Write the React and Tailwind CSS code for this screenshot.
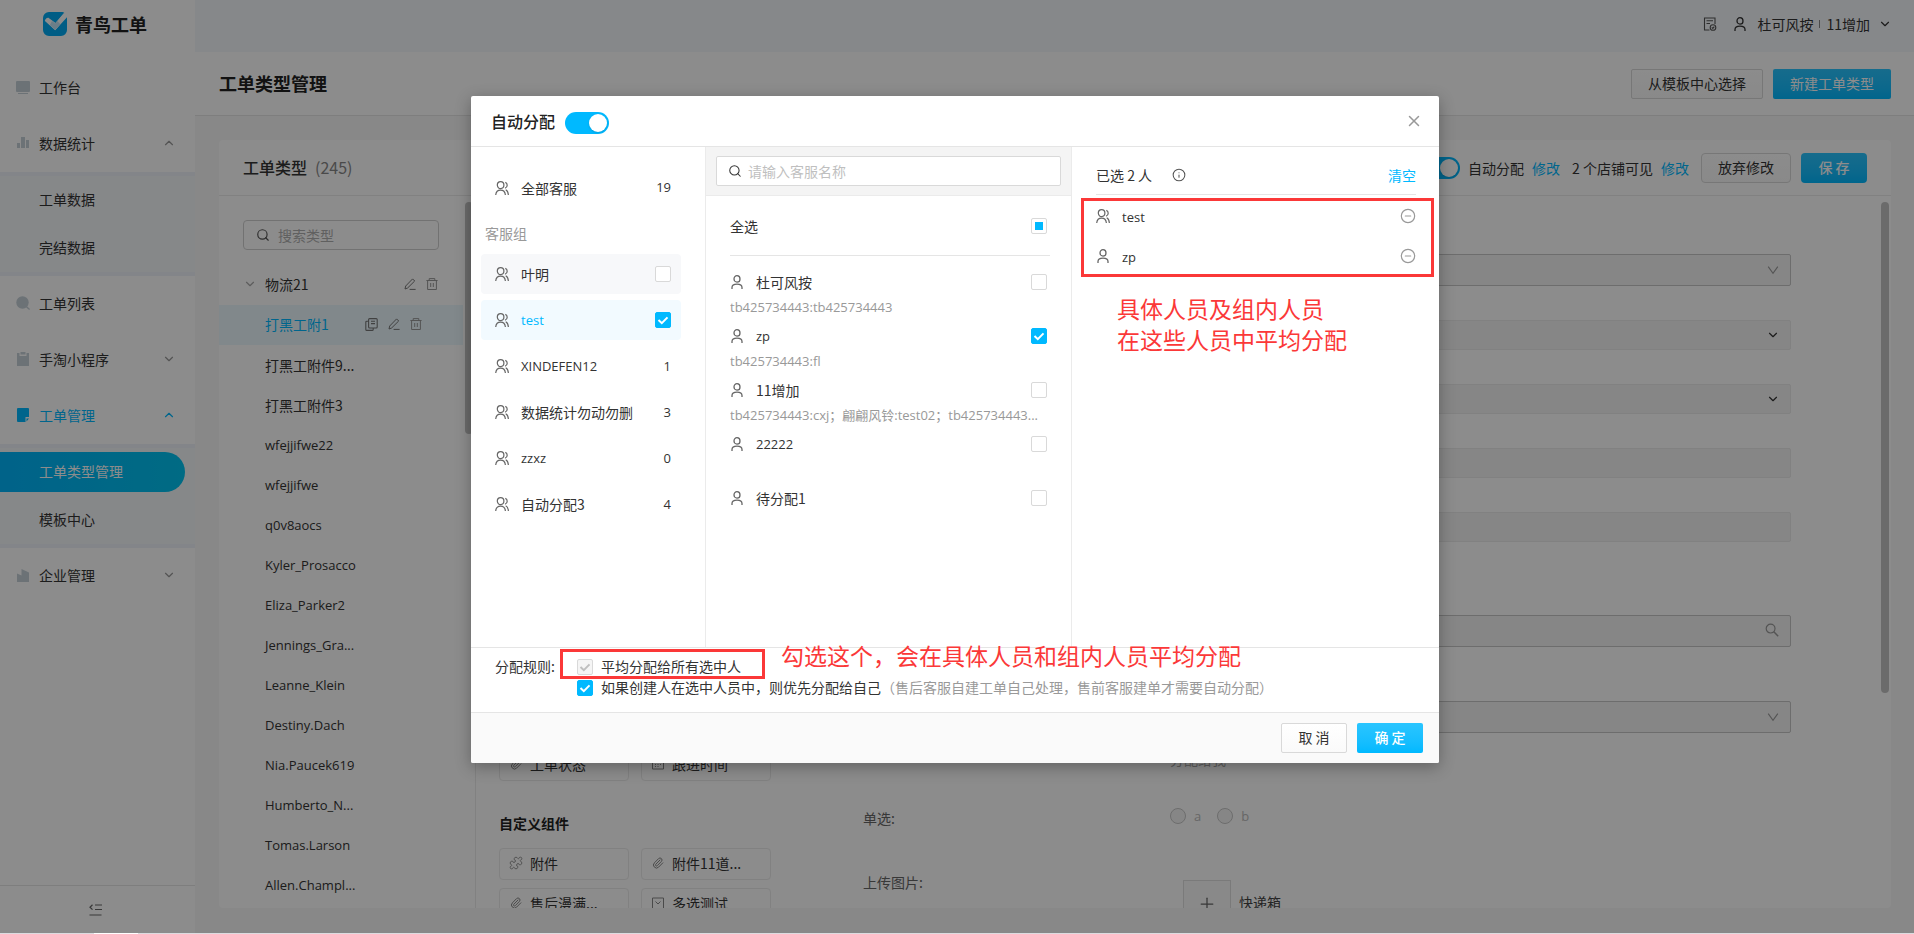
import React from 'react';
import { ChevronDown, ChevronUp, Search, X, Plus, Info, CircleMinus, Paperclip, Puzzle } from 'lucide-react';
import clsx from 'clsx';

const FONT = "font-['Noto_Sans_CJK_SC',sans-serif]";
const LATIN = "font-['Open_Sans','Noto_Sans_CJK_SC',sans-serif] text-[13px]";

// names without any CJK glyphs are set in the latin face
function Name({ children, className }) {
  const latin = /^[\x20-\x7e]+$/.test(children);
  return <span className={clsx('whitespace-nowrap', latin && LATIN, className)}>{children}</span>;
}

/* ---------- icons ---------- */

const PersonIcon = ({ className = 'h-3.5 w-3.5 text-[#666]' }) => (
  <svg viewBox="0 0 14 14" fill="none" stroke="currentColor" strokeWidth="1.3" className={clsx('shrink-0', className)}>
    <ellipse cx="7" cy="3.9" rx="3" ry="3.2" />
    <path d="M2 14v-1.6C2 10.3 3.6 9.2 7 9.2s5 1.1 5 3.2V14" />
  </svg>
);

const GroupIcon = ({ className = 'h-3.5 w-3.5 text-[#666]' }) => (
  <svg viewBox="0 0 14 14" fill="none" stroke="currentColor" strokeWidth="1.2" className={clsx('shrink-0', className)}>
    <ellipse cx="5.6" cy="4.1" rx="3.3" ry="3.5" />
    <path d="M.7 14c.3-3.2 2.1-4.9 4.9-4.9s4.5 1.7 4.8 4.9" />
    <path d="M10.3 1.4c1.3.5 1.9 1.5 1.9 2.8s-.8 2.5-2.2 3.1" />
    <path d="M10.7 8.8c1.7.8 2.5 2.5 2.7 5.2" />
  </svg>
);

const ThinChevron = ({ className }) => (
  <svg viewBox="0 0 12 12" fill="none" stroke="currentColor" strokeWidth="1.1" className={clsx('h-3 w-3', className)}>
    <path d="M1.2 2.6L6 9.2l4.8-6.6" />
  </svg>
);

const PencilIcon = () => (
  <svg viewBox="0 0 12 12" fill="none" stroke="currentColor" strokeWidth="1" className="h-3 w-3">
    <path d="M8.6.9l2.1 2.1L3.6 10 1 11l.7-3z M5.6 11.4h6" />
  </svg>
);

const TrashIcon = () => (
  <svg viewBox="0 0 12 12" fill="none" stroke="currentColor" strokeWidth="1" className="h-3 w-3 text-[#999]">
    <path d="M.4 2.5h11.2M3.2 2.5V.6h5.6v1.9M1.6 2.5v9h8.8v-9M4.7 5v4M7.3 5v4" />
  </svg>
);

const CopyIcon = () => (
  <svg viewBox="0 0 13 13" fill="none" stroke="currentColor" strokeWidth="1.1" className="h-[13px] w-[13px]">
    <rect x="3.6" y=".6" width="8.6" height="9.4" rx="1" />
    <path d="M3.6 3.2H1.8a1 1 0 0 0-1 1v7.2a1 1 0 0 0 1 1h5.4a1 1 0 0 0 1-1V10M6 3.3h4M6 5.6h4" />
  </svg>
);

const CheckMark = ({ className }) => (
  <svg viewBox="0 0 16 16" fill="none" stroke="currentColor" strokeWidth="2" className={className}>
    <path d="M3.5 8l3.3 3.2L12.5 5.4" />
  </svg>
);

const Logo = () => (
  <svg viewBox="0 0 24 24" className="h-6 w-6">
    <path d="M6 0h12.5c1.4 0 2.2.3 2.8.9L12.6 11 5 5.6 1.7 8.7l10.5 9.5L24 5.2V18a6 6 0 0 1-6 6H6a6 6 0 0 1-6-6V6a6 6 0 0 1 6-6z" fill="#00aaf2" />
    <path d="M2.6 7.2c.8-1.2 2-1.5 3-.7l6.5 5 8.6-10.3c1.2.6 2 1.5 2.4 2.8L13.4 16.7c-.8.9-1.8.9-2.6.1L2.7 9.3c-.7-.6-.6-1.5-.1-2.1z" fill="#fff" />
    <path d="M9 9.1l3.1 2.4 2.2-2.4 3.1 3.1-4 4.5c-.8.9-1.8.9-2.6.1L6.9 13z" fill="#a9dcf5" opacity=".7" />
  </svg>
);

const menuIcons = {
  desk: (
    <>
      <rect x="0" y="1" width="14" height="11" rx="1" />
      <rect x="2" y="13" width="10" height="1" />
    </>
  ),
  stats: (
    <>
      <rect x="1" y="7" width="3" height="5" />
      <rect x="5" y="1" width="4" height="11" />
      <rect x="10" y="4" width="3" height="8" />
    </>
  ),
  list: (
    <>
      <circle cx="6.5" cy="6.5" r="6.2" />
      <path d="M10 11.2l1-1 3 2.8-.8.9z" />
    </>
  ),
  clip: <path d="M1 1h2.5v3h7V1H13v13H1zM4.5 0h5v2.6h-5z" />,
  note: <path d="M2 0h10a1 1 0 0 1 1 1v8H9.5v5H2a1 1 0 0 1-1-1V1a1 1 0 0 1 1-1zM10.5 10.5H13L10.5 13.5z" />,
  corp: <path d="M1 5.5l4.5 2V1L13 4.5V14H1z" />,
};

/* ---------- form controls ---------- */

function Checkbox({ label, checked, disabled, partial }) {
  return (
    <span className="relative inline-flex h-4 w-4 shrink-0">
      <input
        type="checkbox"
        aria-label={label}
        defaultChecked={checked}
        disabled={disabled}
        className="peer h-4 w-4 appearance-none rounded-xs border border-[#d9d9d9] bg-white enabled:checked:border-[#00b9ff] enabled:checked:bg-[#00b9ff] disabled:bg-[#f5f5f5]"
      />
      <CheckMark
        className={clsx('pointer-events-none absolute inset-0 hidden h-4 w-4 peer-checked:block', disabled ? 'text-[#bfbfbf]' : 'text-white')}
      />
      {partial && <span className="pointer-events-none absolute inset-1 bg-[#00b9ff]" />}
    </span>
  );
}

function Toggle({ label, className }) {
  return (
    <button
      type="button"
      role="switch"
      aria-checked="true"
      aria-label={label}
      className={clsx('flex h-[22px] w-11 shrink-0 items-center justify-end rounded-full bg-[#00b9ff] p-0.5', className)}
    >
      <span className="h-[18px] w-[18px] rounded-full bg-white shadow-sm" />
    </button>
  );
}

function Button({ primary, className, children }) {
  return (
    <button
      type="button"
      className={clsx(
        'flex h-[30px] items-center justify-center whitespace-nowrap border pb-0.5 text-sm',
        primary
          ? 'border-transparent bg-linear-to-b from-[#29c5ff] to-[#00b9ff] bg-origin-border text-white'
          : 'border-[#d9d9d9] bg-linear-to-b from-white to-[#fafafa] text-[#333]',
        className,
      )}
    >
      {children}
    </button>
  );
}

/* ---------- sidebar ---------- */

const MENU = [
  { icon: 'desk', label: '工作台' },
  { icon: 'stats', label: '数据统计', open: true, children: ['工单数据', '完结数据'] },
  { icon: 'list', label: '工单列表' },
  { icon: 'clip', label: '手淘小程序', folded: true },
  { icon: 'note', label: '工单管理', open: true, active: true, children: ['工单类型管理', '模板中心'] },
  { icon: 'corp', label: '企业管理', folded: true },
];

function Sidebar() {
  return (
    <aside className="flex w-[195px] shrink-0 flex-col bg-white">
      <div className="flex h-12 items-center gap-2 pl-[43px] text-lg font-bold text-[#222]">
        <Logo />
        青鸟工单
      </div>
      <nav className="mt-3 flex-1">
        {MENU.map((item) => (
          <div key={item.label}>
            <a
              href="#"
              className={clsx('flex h-14 items-center pb-0.5 pl-4 pr-[19px]', item.active ? 'text-[#00b9ff]' : 'text-[#333]')}
            >
              <svg viewBox="0 0 14 14" className={clsx('h-3.5 w-3.5', item.active ? 'fill-[#00b9ff]' : 'fill-[#c5d0d8]')}>
                {menuIcons[item.icon]}
              </svg>
              <span className="ml-[9px] flex-1">{item.label}</span>
              {item.open && <ChevronUp className={clsx('h-3.5 w-3.5', !item.active && 'text-[#999]')} />}
              {item.folded && <ChevronDown className="h-3.5 w-3.5 text-[#999]" />}
            </a>
            {item.children && (
              <div className="flex flex-col gap-2 border-y-4 border-[#eef3f9] bg-[#f5f7fa] py-1">
                {item.children.map((child) => (
                  <a
                    key={child}
                    href="#"
                    className={clsx(
                      'mr-2.5 flex h-10 items-center rounded-r-full pb-0.5 pl-[39px]',
                      child === '工单类型管理' ? 'bg-linear-to-r from-[#00b4fa] to-[#00c3f0] text-white' : 'text-[#333]',
                    )}
                  >
                    {child}
                  </a>
                ))}
              </div>
            )}
          </div>
        ))}
      </nav>
      <button type="button" aria-label="收起菜单" className="flex h-12 items-center justify-center border-t border-[#e5e5e5] pr-1">
        <svg viewBox="0 0 13 12" fill="none" stroke="#666" strokeWidth="1.2" className="h-3 w-[13px]">
          <path d="M6 1h7M6 5.5h7M.5 11h12M3.5.8L1 3.2l2.5 2.4" />
        </svg>
      </button>
    </aside>
  );
}

/* ---------- page ---------- */

function TopBar() {
  return (
    <header className="flex h-[52px] shrink-0 items-center justify-end bg-[#f5f8fc] pb-1 pr-[22px] text-[#333]">
      <svg viewBox="0 0 14 14" fill="none" stroke="#555" strokeWidth="1.1" className="mr-4 h-3.5 w-3.5">
        <path d="M6.5 13H1.5V1h10.5v6M3.5 3.8h6.5M3.5 6.5h3.5" />
        <circle cx="10" cy="10.5" r="2.8" />
        <path d="M8.8 10.4l1 1 1.5-1.8" />
      </svg>
      <PersonIcon className="mr-2.5 h-3.5 w-3.5 text-[#333]" />
      <span>杜可风按</span>
      <span className="mx-1.5 h-2 w-px bg-[#888]" />
      <span>11增加</span>
      <ChevronDown className="ml-2 h-3.5 w-3.5" />
    </header>
  );
}

const TYPES = [
  '打黑工附件9...',
  '打黑工附件3',
  'wfejjifwe22',
  'wfejjifwe',
  'q0v8aocs',
  'Kyler_Prosacco',
  'Eliza_Parker2',
  'Jennings_Gra...',
  'Leanne_Klein',
  'Destiny.Dach',
  'Nia.Paucek619',
  'Humberto_N...',
  'Tomas.Larson',
  'Allen.Champl...',
];

function TypeList() {
  return (
    <section className="flex w-[257px] shrink-0 flex-col border-r border-[#ebebeb]">
      <h2 className="flex h-14 shrink-0 items-center gap-2 border-b border-[#ebebeb] pb-0.5 pl-6 text-base font-medium text-[#333]">
        工单类型 <span className="font-normal text-[#888]">(245)</span>
      </h2>
      <div className="flex min-h-0 flex-1">
        <div className="min-w-0 flex-1">
          <label className="ml-6 mt-6 flex h-[30px] w-[196px] items-center gap-2 rounded-sm border border-[#d0d0d0] px-3">
            <Search className="h-3.5 w-3.5 shrink-0 text-[#555]" />
            <input placeholder="搜索类型" aria-label="搜索类型" className="w-full outline-none placeholder:text-[#b0b0b0]" />
          </label>
          <div className="mt-[15px] flex h-10 items-center pb-0.5 pl-6 pr-[25px] text-[#333]">
            <ChevronDown className="mr-2 h-3.5 w-3.5 text-[#aaa]" />
            <span className="flex-1">物流21</span>
            <span className="flex gap-2.5 text-[#777]">
              <PencilIcon />
              <TrashIcon />
            </span>
          </div>
          <div className="flex h-10 items-center bg-[#ebf8fe] pb-0.5 pl-[46px] pr-[41px] text-[#00b9ff]">
            <span className="flex-1">打黑工附1</span>
            <span className="flex gap-2.5 text-[#777]">
              <CopyIcon />
              <PencilIcon />
              <TrashIcon />
            </span>
          </div>
          <ul>
            {TYPES.map((name) => (
              <li key={name} className="flex h-10 items-center pl-[46px] text-[#333]">
                <Name>{name}</Name>
              </li>
            ))}
          </ul>
        </div>
        <div className="ml-0.5 mr-0.5 mt-1.5 h-[232px] w-2 rounded-full bg-[#c4c4c4]" />
      </div>
    </section>
  );
}

function Chip({ icon, children }) {
  return (
    <div className="flex h-8 items-center gap-2 rounded-sm border border-[#ebebeb] px-2.5 pb-0.5 text-[#333]">
      <span className="flex w-3 justify-center text-[#888]">{icon}</span>
      <span className="leading-4">{children}</span>
    </div>
  );
}

const clipIcon = <Paperclip className="h-3 w-3" />;

function ComponentPalette() {
  return (
    <div className="-mb-3 flex w-[295px] shrink-0 flex-col justify-end pl-[23px]">
      <div className="grid grid-cols-2 gap-x-3 gap-y-2">
        <Chip icon={clipIcon}>工单状态</Chip>
        <Chip
          icon={
            <svg viewBox="0 0 12 12" fill="none" stroke="currentColor" className="h-3 w-3">
              <path d="M.5 1.5h11v9.5H.5zM.5 4h11M3 6.5h1M5.5 6.5h1M8 6.5h1M3 8.5h1M5.5 8.5h1" />
            </svg>
          }
        >
          跟进时间
        </Chip>
      </div>
      <h3 className="mb-[15px] mt-8 leading-5 font-bold text-[#222]">自定义组件</h3>
      <div className="grid grid-cols-2 gap-x-3 gap-y-2">
        <Chip icon={<Puzzle className="h-3.5 w-3.5 shrink-0" strokeWidth={1.5} />}>附件</Chip>
        <Chip icon={clipIcon}>附件11道...</Chip>
        <Chip icon={clipIcon}>售后漫满...</Chip>
        <Chip
          icon={
            <svg viewBox="0 0 12 12" fill="none" stroke="currentColor" className="h-3 w-3">
              <path d="M.5 1h11v10.5H.5zM3.5 4.5L6 7l2.5-2.5" />
            </svg>
          }
        >
          多选测试
        </Chip>
      </div>
    </div>
  );
}

const FIELDS = [
  { id: 1, kind: 'select', gap: 'mt-[58px]', box: 'h-8 border-[#c6c6c6]', thin: true },
  { id: 2, kind: 'select', gap: 'mt-[34px]', box: 'h-[30px] border-[#ebebeb]' },
  { id: 3, kind: 'select', gap: 'mt-[34px]', box: 'h-[30px] border-[#ebebeb]' },
  { id: 4, kind: 'text', gap: 'mt-[34px]', box: 'h-[30px] border-[#ebebeb]' },
  { id: 5, kind: 'text', gap: 'mt-[34px]', box: 'h-[30px] border-[#ebebeb]' },
  { id: 6, kind: 'search', gap: 'mt-[73px]', box: 'h-8 border-[#c6c6c6]' },
  { id: 7, kind: 'select', gap: 'mt-[54px]', box: 'h-8 border-[#c6c6c6]', thin: true },
];

function FormPreview() {
  return (
    <div className="flex min-w-0 flex-1 overflow-hidden">
      <div className="min-w-0 flex-1 pl-[92px] pr-[90px]">
        {FIELDS.map((f) => (
          <div key={f.id} className={clsx('relative ml-[307px]', f.gap)}>
            {f.kind === 'select' ? (
              <>
                <select disabled aria-label={`字段${f.id}`} className={clsx('block w-full appearance-none rounded-xs border bg-[#f5f5f5]', f.box)} />
                {f.thin ? (
                  <ThinChevron className="absolute right-3 top-2.5 text-[#999]" />
                ) : (
                  <ChevronDown className="absolute right-[11px] top-2 h-3.5 w-3.5 text-[#333]" />
                )}
              </>
            ) : (
              <input disabled aria-label={`字段${f.id}`} className={clsx('block w-full rounded-xs border bg-[#f5f5f5]', f.box)} />
            )}
            {f.kind === 'search' && (
              <svg viewBox="0 0 14 14" fill="none" stroke="#999" strokeWidth="1.2" className="absolute right-3 top-2 h-3.5 w-3.5">
                <circle cx="5.6" cy="5.6" r="4.4" />
                <path d="M8.8 8.8l4.4 4.4" strokeWidth="1.5" />
              </svg>
            )}
          </div>
        ))}
        <p className="ml-[307px] mt-4 leading-5 text-[#aaa]">分配给我</p>
        <div className="mt-[33px] flex h-8 items-center text-[#666]">
          <span className="w-[307px]">单选:</span>
          {['a', 'b'].map((opt) => (
            <label key={opt} className="mr-4 flex items-center gap-2 pb-1 text-[#bbb]">
              <input type="radio" name="single" disabled className="h-4 w-4 appearance-none rounded-full border border-[#c6c6c6] bg-[#f5f5f5]" />
              <Name>{opt}</Name>
            </label>
          ))}
        </div>
        <div className="mt-8 flex text-[#666]">
          <span className="w-80 leading-8">上传图片:</span>
          <button type="button" aria-label="上传" className="mt-3.5 flex h-12 w-12 shrink-0 items-center justify-center border border-[#dedede] bg-[#fafafa]">
            <Plus className="h-5 w-5" strokeWidth={1.5} />
          </button>
          <span className="ml-2 mt-3.5 whitespace-nowrap pt-3.5 leading-4 text-[#444]">快递箱</span>
        </div>
      </div>
      <div className="mr-0.5 mt-1.5 h-[491px] w-2 rounded-full bg-[#c4c4c4]" />
    </div>
  );
}

function TypeEditor() {
  return (
    <section className="flex min-w-0 flex-1 flex-col">
      <div className="flex h-14 shrink-0 items-center justify-end border-b border-[#ebebeb] pr-6 text-[#333]">
        <Toggle label="启用自动分配" />
        <span className="ml-2">自动分配</span>
        <a href="#" className="ml-2 text-[#00b9ff]">修改</a>
        <span className="ml-3">2 个店铺可见</span>
        <a href="#" className="ml-2 mr-3 text-[#00b9ff]">修改</a>
        <Button className="w-[90px] rounded-sm">放弃修改</Button>
        <Button primary className="ml-2.5 w-[66px] rounded-sm font-medium">保 存</Button>
      </div>
      <div className="flex min-h-0 flex-1 overflow-hidden">
        <ComponentPalette />
        <FormPreview />
      </div>
    </section>
  );
}

/* ---------- dialog ---------- */

const GROUPS = [
  { name: '叶明', checked: false, row: 'bg-[#f7f8fa]' },
  { name: 'test', checked: true, row: 'bg-[#f2faff] text-[#00b9ff]' },
  { name: 'XINDEFEN12', count: 1 },
  { name: '数据统计勿动勿删', count: 3 },
  { name: 'zzxz', count: 0 },
  { name: '自动分配3', count: 4 },
];

const STAFF = [
  { name: '杜可风按', account: 'tb425734443:tb425734443' },
  { name: 'zp', account: 'tb425734443:fl', checked: true },
  { name: '11增加', account: 'tb425734443:cxj；翩翩风铃:test02；tb425734443...' },
  { name: '22222' },
  { name: '待分配1' },
];

function GroupColumn() {
  return (
    <div className="w-[235px] shrink-0 border-r border-[#ebebeb] pl-2.5 pr-6 pt-[21px]">
      <div className="flex h-10 items-center gap-3 pb-px pl-3.5 pr-2.5">
        <GroupIcon />
        <span className="flex-1">全部客服</span>
        <Name>19</Name>
      </div>
      <p className="mb-[11px] mt-[15px] pl-1 leading-5 text-[#999]">客服组</p>
      <ul className="flex flex-col gap-1.5">
        {GROUPS.map((g) => (
          <li key={g.name} className={clsx('flex h-10 items-center gap-3 rounded-sm pl-3.5 pr-2.5', g.row)}>
            <GroupIcon />
            <Name className="flex-1">{g.name}</Name>
            {g.count === undefined ? <Checkbox label={g.name} checked={g.checked} /> : <Name>{String(g.count)}</Name>}
          </li>
        ))}
      </ul>
    </div>
  );
}

function StaffColumn() {
  return (
    <div className="w-[366px] shrink-0 border-r border-[#ebebeb]">
      <div className="border-b border-[#ebebeb] bg-[#f4f4f4] px-2.5 py-[9px]">
        <label className="flex h-[30px] items-center gap-1.5 rounded-xs border border-[#d9d9d9] bg-white px-[11px]">
          <Search className="h-3.5 w-3.5 shrink-0 text-[#333]" strokeWidth={1.8} />
          <input placeholder="请输入客服名称" aria-label="请输入客服名称" className="w-full outline-none placeholder:text-[#bfbfbf]" />
        </label>
      </div>
      <div className="pl-6 pr-[21px]">
        <div className="flex h-[60px] items-center justify-between border-b border-[#e5e5e5] pr-[3px]">
          全选
          <Checkbox label="全选" partial />
        </div>
        <ul className="pt-3.5">
          {STAFF.map((s) => (
            <li key={s.name} className="h-[54px]">
              <div className="flex h-6 items-center pr-[3px]">
                <PersonIcon />
                <Name className="ml-3 flex-1">{s.name}</Name>
                <Checkbox label={s.name} checked={s.checked} />
              </div>
              {s.account && (
                <p className="truncate pt-px font-['Open_Sans','Noto_Sans_CJK_SC',sans-serif] text-[13px] leading-6 text-[#999]">{s.account}</p>
              )}
            </li>
          ))}
        </ul>
      </div>
    </div>
  );
}

function SelectedColumn() {
  return (
    <div className="relative min-w-0 flex-1 pl-6 pr-[23px]">
      <div className="flex h-12 items-center border-b border-[#e5e5e5] pt-2">
        <span>已选 2 人</span>
        <Info className="ml-5 h-3.5 w-3.5 text-[#555]" strokeWidth={1.8} />
        <button type="button" className="ml-auto text-[#00b9ff]">清空</button>
      </div>
      <ul className="pt-px">
        {['test', 'zp'].map((name) => (
          <li key={name} className="flex h-10 items-center">
            {name === 'test' ? <GroupIcon /> : <PersonIcon />}
            <Name className="ml-3 flex-1 pt-0.5">{name}</Name>
            <button type="button" aria-label={`移除 ${name}`}>
              <CircleMinus className="h-4 w-4 text-[#999]" strokeWidth={1.8} />
            </button>
          </li>
        ))}
      </ul>
      {/* callout over the selected list */}
      <div className="pointer-events-none absolute left-[9px] right-[5px] top-[51px] h-[79px] border-3 border-[#fb3838]" />
      <p className="absolute left-[45px] top-[146px] whitespace-nowrap text-[23px] leading-[31px] text-[#fb3838]">
        具体人员及组内人员
        <br />
        在这些人员中平均分配
      </p>
    </div>
  );
}

function AssignDialog() {
  return (
    <div role="dialog" aria-label="自动分配" className="w-[968px] overflow-hidden rounded-xs bg-white text-[#333] shadow-[0_4px_16px_rgba(0,0,0,0.3)]">
      <div className="flex h-[51px] items-center gap-2.5 border-b border-[#e5e5e5] pl-5 pr-4">
        <h2 className="text-base font-medium text-[#222]">自动分配</h2>
        <Toggle label="自动分配" className="mt-1" />
        <button type="button" aria-label="关闭" className="ml-auto">
          <X className="h-[18px] w-[18px] text-[#999]" />
        </button>
      </div>
      <div className="flex h-[500px]">
        <GroupColumn />
        <StaffColumn />
        <SelectedColumn />
      </div>
      <div className="relative flex h-[66px] border-y border-[#e5e5e5] pl-6 pt-2 leading-[21px]">
        <span className="w-[82px]">分配规则:</span>
        <div>
          <label className="flex items-center gap-2">
            <Checkbox label="平均分配给所有选中人" checked disabled />
            平均分配给所有选中人
          </label>
          <label className="flex items-center gap-2">
            <Checkbox label="如果创建人在选中人员中，则优先分配给自己" checked />
            <span>
              如果创建人在选中人员中，则优先分配给自己
              <span className="text-[#999]">（售后客服自建工单自己处理，售前客服建单才需要自动分配）</span>
            </span>
          </label>
        </div>
        {/* callout over the first rule */}
        <div className="pointer-events-none absolute left-[89px] top-px h-[30px] w-[205px] border-3 border-[#fb3838]" />
        <p className="absolute -top-2 left-[310px] whitespace-nowrap text-[23px] leading-[31px] text-[#fb3838]">
          勾选这个，会在具体人员和组内人员平均分配
        </p>
      </div>
      <div className="flex h-[50px] items-center justify-end gap-2.5 bg-[#fafafa] pr-4">
        <Button className="w-[66px] rounded-xs">取 消</Button>
        <Button primary className="w-[66px] rounded-xs font-medium">确 定</Button>
      </div>
    </div>
  );
}

export default function App() {
  return (
    <div className={clsx('flex h-screen flex-col overflow-hidden text-sm', FONT)}>
      <div className="relative flex min-h-0 flex-1">
        <Sidebar />
        <div className="flex min-w-0 flex-1 flex-col">
          <TopBar />
          <div className="flex h-16 shrink-0 items-center gap-2.5 border-b border-[#e5e5e5] bg-white pl-6 pr-[23px]">
            <h1 className="flex-1 pb-0.5 text-lg font-bold text-[#222]">工单类型管理</h1>
            <Button className="w-[132px] rounded-xs">从模板中心选择</Button>
            <Button primary className="w-[118px] rounded-xs">新建工单类型</Button>
          </div>
          <main className="flex min-h-0 flex-1 bg-[#f7f7f7] pb-[25px] pl-6 pr-[23px] pt-6">
            <div className="flex min-w-0 flex-1 overflow-hidden rounded-sm bg-white">
              <TypeList />
              <TypeEditor />
            </div>
          </main>
        </div>
        <div className="absolute inset-0 flex items-start justify-center bg-black/45 pr-1 pt-24">
          <AssignDialog />
        </div>
      </div>
      <div className="flex h-px shrink-0 bg-[#dcdce0]">
        <span className="ml-[94px] w-11 bg-white" />
      </div>
    </div>
  );
}
